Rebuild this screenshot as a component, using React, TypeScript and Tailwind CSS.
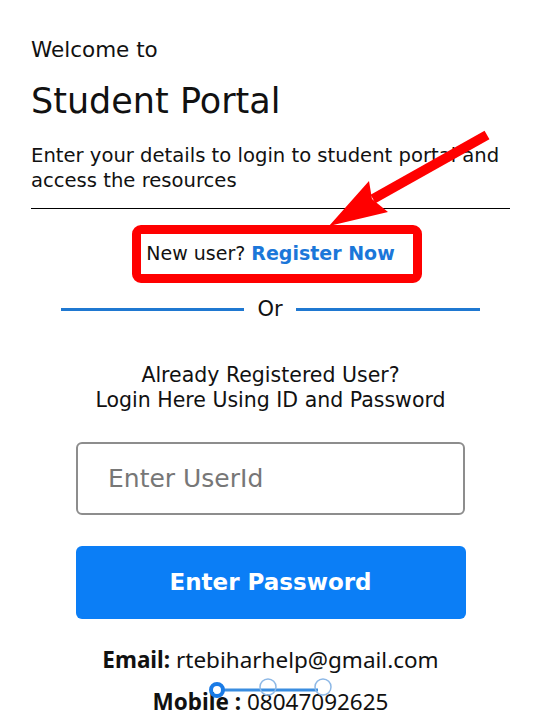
import React from "react";

export default function App() {
  return (
    <div
      className="relative w-[541px] h-[720px] overflow-hidden bg-white text-[#111]"
      style={{ fontFamily: '"DejaVu Sans", "Open Sans", sans-serif' }}
    >
      <div className="px-[31px] pt-[36px]">
        <p className="text-[21.5px] leading-[28px]">Welcome to</p>
        <h1 className="mt-[17px] text-[35px] leading-[40px]">Student Portal</h1>
        <p className="mt-[22px] text-[19.6px] leading-[25px]">
          Enter your details to login to student portal and access the resources
        </p>
        <div className="mt-[15px] h-px bg-black" />
      </div>

      <div className="mt-[30px] flex justify-center">
        <p className="text-[19px] leading-[28px]">
          New user? <span className="font-bold text-[#1b77d9]">Register Now</span>
        </p>
      </div>

      <div className="mt-[28px] flex items-center justify-center">
        <div className="w-[183px] h-[3px] bg-[#1f78d1]" />
        <span className="w-[52px] text-center text-[21px] leading-[28px]">Or</span>
        <div className="w-[184px] h-[3px] bg-[#1f78d1]" />
      </div>

      <div className="mt-[40px] text-center text-[20.5px] leading-[25px]">
        <p>Already Registered User?</p>
        <p>Login Here Using ID and Password</p>
      </div>

      <div className="mt-[29px] flex flex-col items-center gap-[31px]">
        <div className="w-[389px] h-[73px] rounded-[6px] border-2 border-[#8d8d8d] flex items-center pl-[30px] text-[25px] text-[#777]">
          Enter UserId
        </div>
        <button className="w-[390px] h-[73px] rounded-[6px] bg-[#0b7ef6] text-white text-[23px] font-bold">
          Enter Password
        </button>
      </div>

      <div
        className="mt-[20px] text-center text-[22.5px] leading-[42px]"
        style={{ fontFamily: '"Noto Sans", "Open Sans", sans-serif' }}
      >
        <p>
          <span className="font-bold">Email:</span> rtebiharhelp@gmail.com
        </p>
        <p>
          <span className="font-bold">Mobile :</span> 08047092625
        </p>
      </div>

      {/* annotation: red box */}
      <div className="absolute left-[132px] top-[225px] w-[290px] h-[58px] rounded-[9px] border-[9px] border-[#ff0000] pointer-events-none" />

      {/* annotation: red arrow */}
      <svg className="absolute left-0 top-0 pointer-events-none" width="541" height="720">
        <line x1="373" y1="199" x2="487" y2="135" stroke="#ff0000" strokeWidth="10" />
        <polygon points="329,226 369,181 372,199 388,212" fill="#ff0000" />
      </svg>

      {/* stepper overlay */}
      <svg className="absolute left-0 top-0 pointer-events-none" width="541" height="720">
        <line x1="222" y1="690" x2="318" y2="690" stroke="#3a8de0" strokeWidth="3" />
        <circle cx="268" cy="687" r="8" fill="none" stroke="#8db8e6" strokeWidth="1.5" />
        <circle cx="323" cy="687" r="8" fill="none" stroke="#8db8e6" strokeWidth="1.5" />
        <circle cx="217" cy="690" r="6" fill="none" stroke="#1a7be6" strokeWidth="4" />
      </svg>
    </div>
  );
}
